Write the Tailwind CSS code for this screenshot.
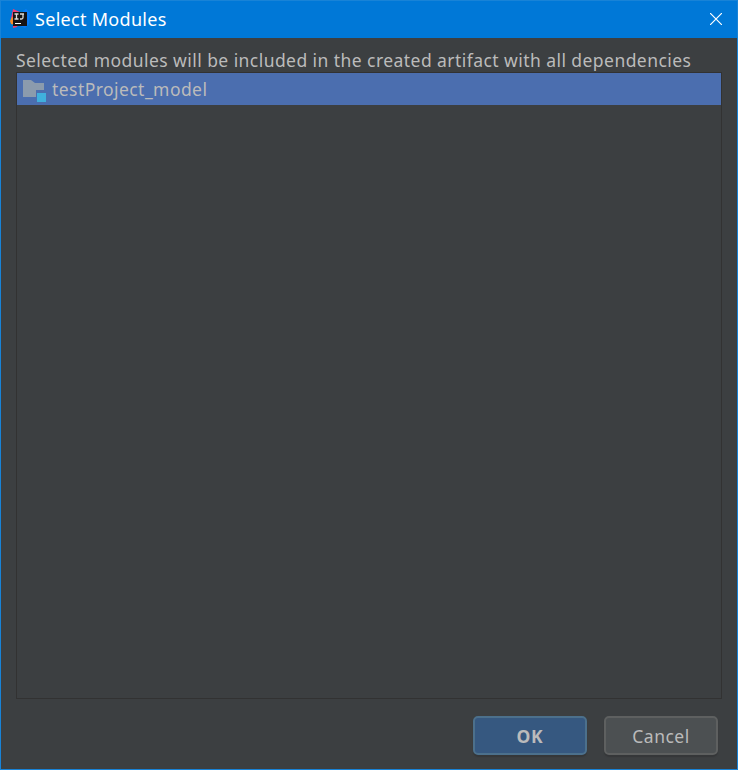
<!DOCTYPE html>
<html lang="en">
<head>
<meta charset="utf-8">
<title>Select Modules</title>
<script src="https://cdn.jsdelivr.net/npm/@tailwindcss/browser@4"></script>
</head>
<body class="font-['Noto_Sans',sans-serif]">
<div class="flex h-[770px] w-[738px] flex-col overflow-hidden border border-[#1883d7] bg-[#3c3f41] text-[#bbbbbb]">
  <header class="flex h-[37px] shrink-0 items-center bg-[#0078d7] pb-[2px] pl-[9px] pr-[15px] text-white">
    <svg class="h-5 w-5 shrink-0" viewBox="0 0 20 20">
      <path d="M3 0l7 3v8l-3 7-4 1v-5l-2-4z" fill="#f43b70"/>
      <path d="M0 12l2-4 3 2v6l-4-1z" fill="#f98b26"/>
      <path d="M13 2l3-2 4 4-1 11-4 4-5-2z" fill="#087cfa"/>
      <path d="M3 3h14v14H3z" fill="#171416"/>
      <path d="M4.500 5h4M6.500 5v5M4.500 10h4M10 5h4M13 5v3.500q0 1.500-1.500 1.500H10" fill="none" stroke="#ddd" stroke-width="1.300"/>
      <path d="M5 14h6v1H5z" fill="#fff"/>
    </svg>
    <h1 class="ml-[5px] whitespace-nowrap text-[18px] leading-6 tracking-[0.3px]">Select Modules</h1>
    <svg class="ml-auto h-3 w-3" viewBox="0 0 12 12" fill="none" stroke="#fff" stroke-width="1.2"><path d="M0 0l12 12M12 0L0 12"/></svg>
  </header>
  <main class="flex grow flex-col px-[15px] pb-[14px] pt-[10px]">
    <p class="h-6 whitespace-nowrap text-[17.5px] leading-6 tracking-[0.44px]">Selected modules will be included in the created artifact with all dependencies</p>
    <div class="h-[627px] w-[706px] border border-[#323232]">
      <div class="flex h-8 items-center bg-[#4b6eaf] pl-[6px]">
        <svg class="h-[26px] w-6 shrink-0" viewBox="0 0 24 26">
          <path d="M0 4h8l4 3h9v7h-8v7H0z" fill="#8b9bad"/>
          <path d="M14 17h9v9h-9z" fill="#40b0dd"/>
        </svg>
        <span class="ml-[5px] whitespace-nowrap text-[17.5px] leading-6 tracking-[0.44px]">testProject_model</span>
      </div>
    </div>
    <div class="mt-[17px] flex justify-end gap-[17px] pr-[4px]">
      <button class="h-[39px] w-[114px] rounded-[5px] border-2 border-[#4c708c] bg-[#365880] text-[17.5px] font-bold leading-6 tracking-[0.8px] shadow-[0_2px_1px_#353739]">OK</button>
      <button class="h-[39px] w-[114px] rounded-[5px] border-2 border-[#5e6060] bg-[#4c5052] text-[17.5px] leading-6 tracking-[0.5px] shadow-[0_2px_1px_#353739]">Cancel</button>
    </div>
  </main>
</div>
</body>
</html>
